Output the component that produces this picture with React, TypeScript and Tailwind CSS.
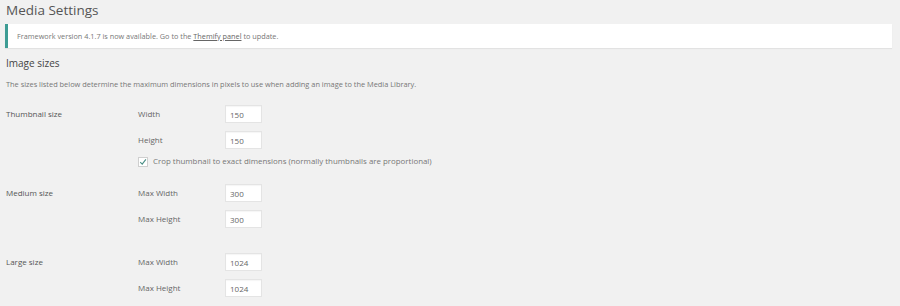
import type { ReactNode } from 'react';

const font = { fontFamily: '"Open Sans", "Noto Sans", Arial, sans-serif' };

function Field({ label, value }: { label: string; value: string }) {
  return (
    <div className="flex h-[18px] items-center">
      <span className="w-[87px] text-[8px] text-[#666]">{label}</span>
      <input
        readOnly
        value={value}
        className="h-[18px] w-[37px] border border-[#e4e4e4] bg-white px-[4px] text-[8px] text-[#666] shadow-[inset_0_1px_1px_rgba(0,0,0,0.04)] outline-none"
      />
    </div>
  );
}

function SizeRow({ title, className, children }: { title: string; className?: string; children: ReactNode }) {
  return (
    <div className={`flex ${className ?? ''}`}>
      <div className="flex h-[18px] w-[132px] items-center text-[8px] text-[#555]">{title}</div>
      <div className="flex flex-col gap-[8px]">{children}</div>
    </div>
  );
}

export default function App() {
  return (
    <div className="h-[306px] w-[900px] overflow-hidden bg-[#f1f1f1] pl-[6px]" style={font}>
      <h1 className="h-[20px] text-[13.5px] leading-[20px] text-[#555]">Media Settings</h1>

      {/* Update notice */}
      <div className="mt-[4px] ml-[-1px] flex h-[24px] w-[887px] items-center border-l-[3px] border-[#3d9c94] bg-white pl-[9px] text-[7.3px] text-[#777] shadow-[0_1px_1px_rgba(0,0,0,0.06)]">
        Framework version 4.1.7 is now available. Go to the&nbsp;
        <a className="text-[#666] underline">Themify panel</a>&nbsp;to update.
      </div>

      <h2 className="mt-[8px] h-[14px] text-[10px] leading-[14px] text-[#444]">Image sizes</h2>
      <p className="mt-[9px] h-[10px] text-[7.4px] leading-[10px] text-[#777]">
        The sizes listed below determine the maximum dimensions in pixels to use when adding an image to the Media Library.
      </p>

      <SizeRow title="Thumbnail size" className="mt-[16px]">
        <Field label="Width" value="150" />
        <Field label="Height" value="150" />
      </SizeRow>

      <div className="mt-[7px] ml-[132px] flex h-[12px] items-center">
        <span className="flex h-[10px] w-[10px] items-center justify-center border border-[#cfcfcf] bg-white">
          <svg viewBox="0 0 10 10" className="h-[8px] w-[8px]">
            <path d="M1.5 5.2 L4 7.6 L8.6 1.8" fill="none" stroke="#4a8f86" strokeWidth="1.4" />
          </svg>
        </span>
        <span className="ml-[5px] text-[7.9px] text-[#777]">
          Crop thumbnail to exact dimensions (normally thumbnails are proportional)
        </span>
      </div>

      <SizeRow title="Medium size" className="mt-[16px]">
        <Field label="Max Width" value="300" />
        <Field label="Max Height" value="300" />
      </SizeRow>

      <SizeRow title="Large size" className="mt-[25px]">
        <Field label="Max Width" value="1024" />
        <Field label="Max Height" value="1024" />
      </SizeRow>
    </div>
  );
}
